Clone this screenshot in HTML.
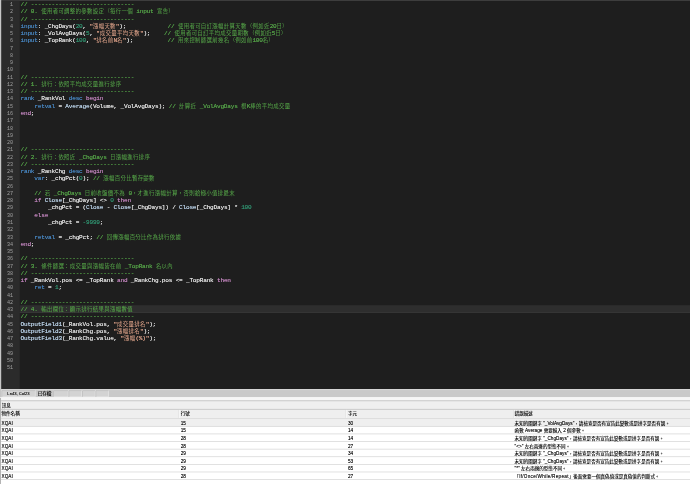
<!DOCTYPE html>
<html lang="zh-Hant"><head><meta charset="utf-8"><title>XQAI</title>
<style>
html,body{margin:0;padding:0;}
body{width:690px;height:484px;overflow:hidden;background:#fff;}
#app{position:relative;width:690px;height:484px;overflow:hidden;background:#fff;}
#bg{position:absolute;left:0;top:0;display:block;}
#editor{position:absolute;left:0;top:0;width:690px;height:389px;overflow:hidden;}
#code{position:absolute;left:0;top:1.4px;width:690px;will-change:transform;font-family:"Liberation Mono","Noto Sans CJK TC",monospace;font-size:6.1px;letter-spacing:-0.21px;color:#dcdcdc;text-shadow:0 0 0.45px currentColor;}
.ln{position:relative;white-space:pre;height:7.27px;line-height:7.27px;padding-left:20.5px;}
.ln i{position:absolute;left:0;top:0;width:12.9px;text-align:right;font-style:normal;color:#a0a0a0;text-shadow:none;transform:scaleX(0.84);transform-origin:100% 50%;}
.ln u{text-decoration:none;font-weight:300;font-size:5.4px;letter-spacing:0.34px;}
.c{color:#529d46}.k{color:#4682ba}.f{color:#b87fb4}.n{color:#2f8a6a}.s{color:#d69d85}.i{color:#dcdcdc}.b{color:#b4cbe0}
#status{position:absolute;left:0;top:389px;width:690px;height:8.5px;will-change:transform;font-family:"Liberation Sans","Noto Sans CJK TC",sans-serif;font-size:4.7px;color:#000;white-space:nowrap;text-shadow:0 0 0.35px rgba(0,0,0,.55);}
#status .p{position:absolute;top:1.5px;height:6.2px;line-height:6.2px;text-align:center;}
.p1{left:2px;width:33px}.p2{left:36px;width:17px}
#msg{position:absolute;left:0;top:397.5px;width:690px;height:86.5px;will-change:transform;font-family:"Liberation Sans","Noto Sans CJK TC",sans-serif;font-size:4.55px;color:#000;white-space:nowrap;text-shadow:0 0 0.35px rgba(0,0,0,.55);}
#msg .title{position:absolute;left:1.8px;top:3.5px;height:8px;line-height:8px;}
#msg .hdr{position:absolute;left:0;top:12px;width:690px;height:8.5px;line-height:8.5px;}
#msg .row{position:absolute;left:0;width:690px;height:7.61px;line-height:7.61px;}
.c1,.c2,.c3,.c4{position:absolute;top:0;}
.c1{left:1.5px}.c2{left:180.7px}.c3{left:348px}.c4{left:514.6px}
#msg .l,.c1,.c2,.c3{font-size:4.7px}
#msg .w{letter-spacing:0.25px}
#msg .hdr span{font-size:4.55px}
#status .l{font-size:4.15px}
#msg .row:nth-of-type(3){top:21.70px}
#msg .row:nth-of-type(4){top:29.31px}
#msg .row:nth-of-type(5){top:36.92px}
#msg .row:nth-of-type(6){top:44.53px}
#msg .row:nth-of-type(7){top:52.14px}
#msg .row:nth-of-type(8){top:59.75px}
#msg .row:nth-of-type(9){top:67.36px}
#msg .row:nth-of-type(10){top:74.97px}

</style></head><body>
<div id="app">
<svg id="bg" width="690" height="484" viewBox="0 0 690 484"><rect x="0" y="0" width="690" height="389.1" fill="#1e1e1e"/><rect x="0" y="0" width="690" height="0.75" fill="#484848"/><rect x="0" y="0.75" width="19.7" height="388.35" fill="#2b2b2b"/><rect x="0" y="0" width="1.2" height="398" fill="#c6c6c6"/><rect x="19.7" y="305.2" width="670.3" height="7.8" fill="#2e2e2e"/><rect x="19.7" y="312.2" width="670.3" height="0.8" fill="#373737"/><rect x="1.2" y="389.1" width="688.8" height="8.4" fill="#c9c9c9"/><rect x="1.2" y="389.1" width="688.8" height="1" fill="#d6d6d6"/><rect x="2" y="390.6" width="33.2" height="6.2" fill="#d3d3d3" stroke="#e9e9e9" stroke-width="0.6"/><path d="M2 396.8 v-6.2 h33.2" fill="none" stroke="#a8a8a8" stroke-width="0.5"/><rect x="53.5" y="390.6" width="14.6" height="6.2" fill="#d3d3d3" stroke="#e9e9e9" stroke-width="0.6"/><path d="M53.5 396.8 v-6.2 h14.6" fill="none" stroke="#a8a8a8" stroke-width="0.5"/><rect x="69" y="390.6" width="12.6" height="6.2" fill="#d3d3d3" stroke="#e9e9e9" stroke-width="0.6"/><path d="M69 396.8 v-6.2 h12.6" fill="none" stroke="#a8a8a8" stroke-width="0.5"/><rect x="82.5" y="390.6" width="12.6" height="6.2" fill="#d3d3d3" stroke="#e9e9e9" stroke-width="0.6"/><path d="M82.5 396.8 v-6.2 h12.6" fill="none" stroke="#a8a8a8" stroke-width="0.5"/><rect x="96" y="390.6" width="12.6" height="6.2" fill="#d3d3d3" stroke="#e9e9e9" stroke-width="0.6"/><path d="M96 396.8 v-6.2 h12.6" fill="none" stroke="#a8a8a8" stroke-width="0.5"/><rect x="0" y="397.5" width="690" height="86.5" fill="#ffffff"/><rect x="0" y="397.5" width="690" height="3.2" fill="#f6f6f6"/><rect x="0" y="400.7" width="690" height="17.7" fill="#efefef"/><rect x="0" y="400.4" width="690" height="0.8" fill="#bdbdbd"/><rect x="0" y="408.9" width="690" height="0.8" fill="#c2c2c2"/><rect x="0" y="418" width="690" height="0.8" fill="#cfcfcf"/><rect x="0" y="418.7" width="690" height="7.61" fill="#efefef"/><rect x="0" y="425.96" width="690" height="0.7" fill="#d4d4d4"/><rect x="0" y="433.57" width="690" height="0.7" fill="#d4d4d4"/><rect x="0" y="441.18" width="690" height="0.7" fill="#d4d4d4"/><rect x="0" y="448.79" width="690" height="0.7" fill="#d4d4d4"/><rect x="0" y="456.4" width="690" height="0.7" fill="#d4d4d4"/><rect x="0" y="464.01" width="690" height="0.7" fill="#d4d4d4"/><rect x="0" y="471.62" width="690" height="0.7" fill="#d4d4d4"/><rect x="0" y="479.23" width="690" height="0.7" fill="#d4d4d4"/><rect x="178.3" y="409.9" width="0.6" height="8" fill="#dcdcdc"/><rect x="178.9" y="409.9" width="0.7" height="8" fill="#fbfbfb"/><rect x="345.6" y="409.9" width="0.6" height="8" fill="#dcdcdc"/><rect x="346.2" y="409.9" width="0.7" height="8" fill="#fbfbfb"/><rect x="513.3" y="409.9" width="0.6" height="8" fill="#dcdcdc"/><rect x="513.9" y="409.9" width="0.7" height="8" fill="#fbfbfb"/><rect x="0" y="398" width="1" height="86" fill="#b4b4b4"/></svg>
<div id="editor">
<div id="code">
<div class="ln"><i>1</i><span class="c">// ------------------------------</span></div>
<div class="ln"><i>2</i><span class="c">// 0. <u>使用者可調整的參數設定（每行一個</u> input <u>宣告）</u></span></div>
<div class="ln"><i>3</i><span class="c">// ------------------------------</span></div>
<div class="ln"><i>4</i><span class="k">input</span><span class="i">: _ChgDays(</span><span class="n">20</span><span class="i">, </span><span class="s">"<u>漲幅天數</u>"</span><span class="i">);</span><span class="i">            </span><span class="c">// <u>使用者可自訂漲幅計算天數（例如近</u>20<u>日）</u></span></div>
<div class="ln"><i>5</i><span class="k">input</span><span class="i">: _VolAvgDays(</span><span class="n">5</span><span class="i">, </span><span class="s">"<u>成交量平均天數</u>"</span><span class="i">);</span><span class="i">    </span><span class="c">// <u>使用者可自訂平均成交量期數（例如近</u>5<u>日）</u></span></div>
<div class="ln"><i>6</i><span class="k">input</span><span class="i">: _TopRank(</span><span class="n">100</span><span class="i">, </span><span class="s">"<u>排名前</u>N<u>名</u>"</span><span class="i">);</span><span class="i">          </span><span class="c">// <u>用來控制篩選前幾名（例如前</u>100<u>名）</u></span></div>
<div class="ln"><i>7</i></div>
<div class="ln"><i>8</i></div>
<div class="ln"><i>9</i></div>
<div class="ln"><i>10</i></div>
<div class="ln"><i>11</i><span class="c">// ------------------------------</span></div>
<div class="ln"><i>12</i><span class="c">// 1. <u>排行：依照平均成交量進行排序</u></span></div>
<div class="ln"><i>13</i><span class="c">// ------------------------------</span></div>
<div class="ln"><i>14</i><span class="k">rank</span><span class="i"> _RankVol </span><span class="k">desc</span><span class="i"> </span><span class="f">begin</span></div>
<div class="ln"><i>15</i><span class="i">    </span><span class="k">retval</span><span class="i"> = </span><span class="b">Average</span><span class="i">(Volume, _VolAvgDays); </span><span class="c">// <u>計算近</u> _VolAvgDays <u>根</u>K<u>棒的平均成交量</u></span></div>
<div class="ln"><i>16</i><span class="f">end</span><span class="i">;</span></div>
<div class="ln"><i>17</i></div>
<div class="ln"><i>18</i></div>
<div class="ln"><i>19</i></div>
<div class="ln"><i>20</i></div>
<div class="ln"><i>21</i><span class="c">// ------------------------------</span></div>
<div class="ln"><i>22</i><span class="c">// 2. <u>排行：依照近</u> _ChgDays <u>日漲幅進行排序</u></span></div>
<div class="ln"><i>23</i><span class="c">// ------------------------------</span></div>
<div class="ln"><i>24</i><span class="k">rank</span><span class="i"> _RankChg </span><span class="k">desc</span><span class="i"> </span><span class="f">begin</span></div>
<div class="ln"><i>25</i><span class="i">    </span><span class="k">var</span><span class="i">: _chgPct(</span><span class="n">0</span><span class="i">); </span><span class="c">// <u>漲幅百分比暫存變數</u></span></div>
<div class="ln"><i>26</i></div>
<div class="ln"><i>27</i><span class="i">    </span><span class="c">// <u>若</u> _ChgDays <u>日前收盤價不為</u> 0<u>，才進行漲幅計算，否則給極小值排最末</u></span></div>
<div class="ln"><i>28</i><span class="i">    </span><span class="f">if</span><span class="b"> Close</span><span class="i">[_ChgDays] &lt;&gt; </span><span class="n">0</span><span class="i"> </span><span class="f">then</span></div>
<div class="ln"><i>29</i><span class="i">        _chgPct = (</span><span class="b">Close</span><span class="i"> - </span><span class="b">Close</span><span class="i">[_ChgDays]) / </span><span class="b">Close</span><span class="i">[_ChgDays] * </span><span class="n">100</span></div>
<div class="ln"><i>30</i><span class="i">    </span><span class="f">else</span></div>
<div class="ln"><i>31</i><span class="i">        _chgPct = </span><span class="n">-9999</span><span class="i">;</span></div>
<div class="ln"><i>32</i></div>
<div class="ln"><i>33</i><span class="i">    </span><span class="k">retval</span><span class="i"> = _chgPct; </span><span class="c">// <u>回傳漲幅百分比作為排行依據</u></span></div>
<div class="ln"><i>34</i><span class="f">end</span><span class="i">;</span></div>
<div class="ln"><i>35</i></div>
<div class="ln"><i>36</i><span class="c">// ------------------------------</span></div>
<div class="ln"><i>37</i><span class="c">// 3. <u>條件篩選：成交量與漲幅皆在前</u> _TopRank <u>名以內</u></span></div>
<div class="ln"><i>38</i><span class="c">// ------------------------------</span></div>
<div class="ln"><i>39</i><span class="f">if</span><span class="i"> _RankVol.pos &lt;= _TopRank </span><span class="f">and</span><span class="i"> _RankChg.pos &lt;= _TopRank </span><span class="f">then</span></div>
<div class="ln"><i>40</i><span class="i">    </span><span class="k">ret</span><span class="i"> = </span><span class="n">1</span><span class="i">;</span></div>
<div class="ln"><i>41</i></div>
<div class="ln"><i>42</i><span class="c">// ------------------------------</span></div>
<div class="ln"><i>43</i><span class="c">// 4. <u>輸出欄位：顯示排行結果與漲幅數值</u></span></div>
<div class="ln"><i>44</i><span class="c">// ------------------------------</span></div>
<div class="ln"><i>45</i><span class="b">OutputField1</span><span class="i">(_RankVol.pos, </span><span class="s">"<u>成交量排名</u>"</span><span class="i">);</span></div>
<div class="ln"><i>46</i><span class="b">OutputField2</span><span class="i">(_RankChg.pos, </span><span class="s">"<u>漲幅排名</u>"</span><span class="i">);</span></div>
<div class="ln"><i>47</i><span class="b">OutputField3</span><span class="i">(_RankChg.value, </span><span class="s">"<u>漲幅</u>(%)"</span><span class="i">);</span></div>
<div class="ln"><i>48</i></div>
<div class="ln"><i>49</i></div>
<div class="ln"><i>50</i></div>
<div class="ln"><i>51</i></div>
</div>
</div>
<div id="status"><span class="p p1"><span class="l">Ln43, Col23</span></span><span class="p p2">已存檔</span></div>
<div id="msg">
<div class="title">訊息</div>
<div class="hdr"><span class="c1">物件名稱</span><span class="c2">行號</span><span class="c3">字元</span><span class="c4">錯誤描述</span></div>
<div class="row sel"><span class="c1">XQAI</span><span class="c2">15</span><span class="c3">30</span><span class="c4">未知的關鍵字<span class="l"> "_VolAvgDays"</span>，請檢查是否有宣告此變數或是拼字是否有誤。</span></div>
<div class="row"><span class="c1">XQAI</span><span class="c2">15</span><span class="c3">14</span><span class="c4">函數<span class="l"> Average </span>需要輸入<span class="l"> 2 </span>個參數。</span></div>
<div class="row"><span class="c1">XQAI</span><span class="c2">28</span><span class="c3">14</span><span class="c4">未知的關鍵字<span class="l"> "_ChgDays"</span>，請檢查是否有宣告此變數或是拼字是否有誤。</span></div>
<div class="row"><span class="c1">XQAI</span><span class="c2">28</span><span class="c3">27</span><span class="c4"><span class="l">"&lt;&gt;" </span>左右兩邊的型態不同。</span></div>
<div class="row"><span class="c1">XQAI</span><span class="c2">29</span><span class="c3">34</span><span class="c4">未知的關鍵字<span class="l"> "_ChgDays"</span>，請檢查是否有宣告此變數或是拼字是否有誤。</span></div>
<div class="row"><span class="c1">XQAI</span><span class="c2">29</span><span class="c3">53</span><span class="c4">未知的關鍵字<span class="l"> "_ChgDays"</span>，請檢查是否有宣告此變數或是拼字是否有誤。</span></div>
<div class="row"><span class="c1">XQAI</span><span class="c2">29</span><span class="c3">65</span><span class="c4"><span class="l">"*" </span>左右兩邊的型態不同。</span></div>
<div class="row"><span class="c1">XQAI</span><span class="c2">28</span><span class="c3">27</span><span class="c4">「<span class="l w">If/Once/While/Repeat</span>」後面需要一個真偽值或是真偽值的判斷式。</span></div>
</div>
</div>
</body></html>
